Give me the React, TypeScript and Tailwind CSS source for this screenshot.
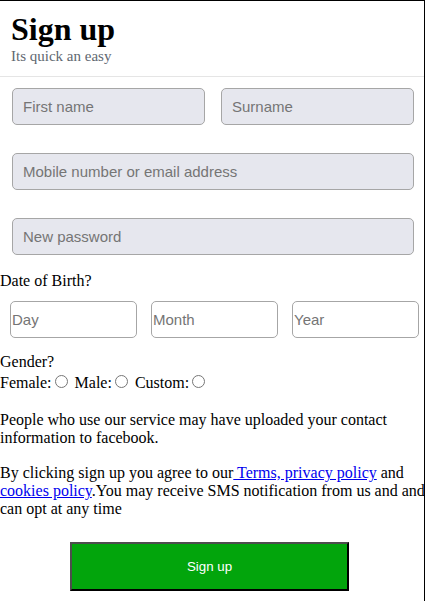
export default function App() {
  const fieldClass =
    "h-[37px] w-full rounded-[5px] border border-[#a6a6a6] bg-[#e6e7ee] pl-[10px] font-['Liberation_Sans',Arial,sans-serif] text-[15px] text-black placeholder:text-[#757575] outline-none";
  const dateClass =
    "h-[37px] w-[127px] rounded-[5px] border border-[#a6a6a6] bg-white pl-[1px] font-['Liberation_Sans',Arial,sans-serif] text-[15px] text-black placeholder:text-[#757575] outline-none";
  const radioClass = "mt-[3px] mr-[3px] ml-[3px] align-baseline";

  return (
    <div className="h-[601px] w-[425px] border-t border-r border-black bg-white font-['Liberation_Serif','Times_New_Roman',serif] text-[16px] text-black">
      <div className="border-b border-[#e5e5e5] pt-[12px] pb-[11px] pl-[11px]">
        <h1 className="text-[32px] font-bold leading-[32px]">Sign up</h1>
        <p className="mt-[2px] text-[15px] leading-[18px] text-[#606770]">
          Its quick an easy
        </p>
      </div>

      <form onSubmit={(e) => e.preventDefault()}>
        <div className="mt-[11px] flex flex-col gap-[28px] pr-[10px] pl-[12px]">
          <div className="grid grid-cols-2 gap-[16px]">
            <input className={fieldClass} placeholder="First name" />
            <input className={fieldClass} placeholder="Surname" />
          </div>
          <input className={fieldClass} placeholder="Mobile number or email address" />
          <input className={fieldClass} type="password" placeholder="New password" />
        </div>

        <p className="mt-[17px] leading-[18px]">Date of Birth?</p>
        <div className="mt-[11px] flex gap-[14px] px-[10px]">
          <input className={dateClass} placeholder="Day" />
          <input className={dateClass} placeholder="Month" />
          <input className={dateClass} placeholder="Year" />
        </div>

        <p className="mt-[15px] leading-[18px]">Gender?</p>
        <div className="mt-[1px] leading-[18px]">
          Female:
          <input type="radio" name="gender" className={radioClass} />{" "}
          Male:
          <input type="radio" name="gender" className={radioClass} />{" "}
          Custom:
          <input type="radio" name="gender" className={radioClass} />
        </div>

        <p className="mt-[19px] leading-[18px]">
          People who use our service may have uploaded your contact information to facebook.
        </p>
        <p className="mt-[17px] mr-[-4px] leading-[18px]">
          By clicking sign up you agree to our
          <a href="#" className="text-[#0000ee] underline">
            {" "}Terms, privacy policy
          </a>{" "}
          and{" "}
          <a href="#" className="text-[#0000ee] underline">
            cookies policy
          </a>
          .You may receive SMS notification from us and and can opt at any time
        </p>

        <button
          type="submit"
          className="mt-[24px] ml-[70px] h-[49px] w-[279px] border-2 border-t-[#4d4d4d] border-r-black border-b-black border-l-[#4d4d4d] bg-[#02a50c] font-['Liberation_Sans',Arial,sans-serif] text-[13.33px] text-white"
        >
          Sign up
        </button>
      </form>
    </div>
  );
}
